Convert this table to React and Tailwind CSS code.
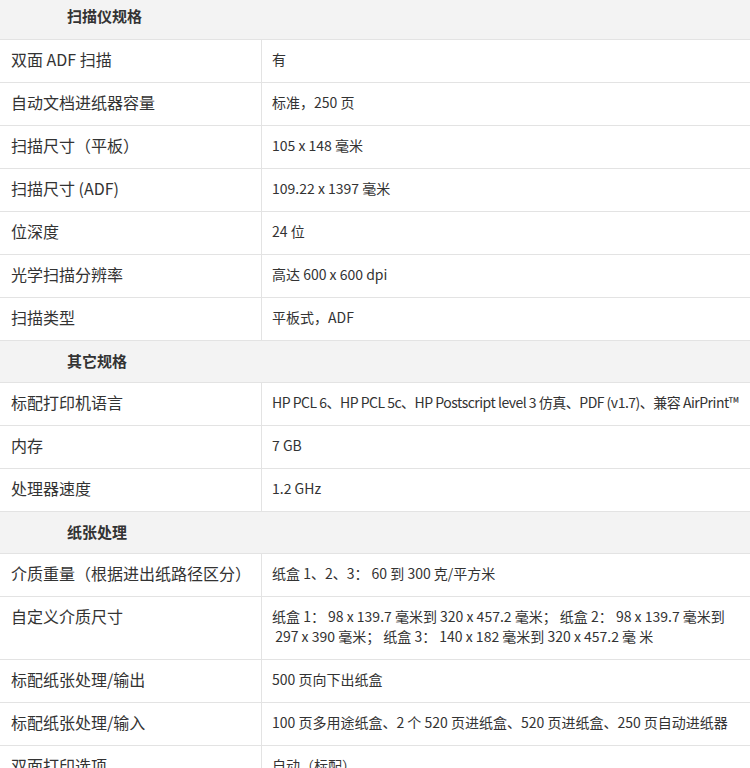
import React from "react";

const sections = [
  {
    title: "扫描仪规格",
    first: true,
    rows: [
      ["双面 ADF 扫描", "有"],
      ["自动文档进纸器容量", "标准，250 页"],
      ["扫描尺寸（平板）", "105 x 148 毫米"],
      ["扫描尺寸 (ADF)", "109.22 x 1397 毫米"],
      ["位深度", "24 位"],
      ["光学扫描分辨率", "高达 600 x 600 dpi"],
      ["扫描类型", "平板式，ADF"],
    ],
  },
  {
    title: "其它规格",
    rows: [
      ["标配打印机语言", "HP PCL 6、HP PCL 5c、HP Postscript level 3 仿真、PDF (v1.7)、兼容 AirPrint™", true],
      ["内存", "7 GB"],
      ["处理器速度", "1.2 GHz"],
    ],
  },
  {
    title: "纸张处理",
    rows: [
      ["介质重量（根据进出纸路径区分）", "纸盒 1、2、3： 60 到 300 克/平方米"],
      [
        "自定义介质尺寸",
        <>
          纸盒 1： 98 x 139.7 毫米到 320 x 457.2 毫米； 纸盒 2： 98 x 139.7 毫米到
          <br />
          &nbsp;297 x 390 毫米； 纸盒 3： 140 x 182 毫米到 320 x 457.2 毫 米
        </>,
      ],
      ["标配纸张处理/输出", "500 页向下出纸盒"],
      ["标配纸张处理/输入", "100 页多用途纸盒、2 个 520 页进纸盒、520 页进纸盒、250 页自动进纸器"],
      ["双面打印选项", "自动（标配）"],
    ],
  },
];

export default function App() {
  return (
    <div
      className="w-[750px] h-[768px] overflow-hidden bg-white text-[#333]"
      style={{ fontFamily: '"Noto Sans CJK SC", "Noto Sans", sans-serif' }}
    >
      {sections.map((sec) => (
        <div key={sec.title}>
          {/* section header */}
          <div
            className={
              "bg-[#f3f3f3] border-b border-[#e3e3e3] pl-[67px] flex items-center text-[15px] font-bold " +
              (sec.first ? "h-[40px] pb-[6px]" : "h-[42px]")
            }
          >
            {sec.title}
          </div>

          {sec.rows.map(([label, value, tight], i) => (
            <div
              key={i}
              className="grid grid-cols-[262px_1fr] border-b border-[#e3e3e3]"
            >
              <div className="pl-[11px] pt-[9px] pb-[13px] leading-[20px] text-[16px] border-r border-[#e3e3e3]">
                {label}
              </div>
              <div
                className={
                  "pl-[10px] pr-[8px] pt-[9px] pb-[13px] leading-[20px] text-[14px] " +
                  (tight ? "whitespace-nowrap tracking-[-0.5px]" : "")
                }
              >
                {value}
              </div>
            </div>
          ))}
        </div>
      ))}
    </div>
  );
}
